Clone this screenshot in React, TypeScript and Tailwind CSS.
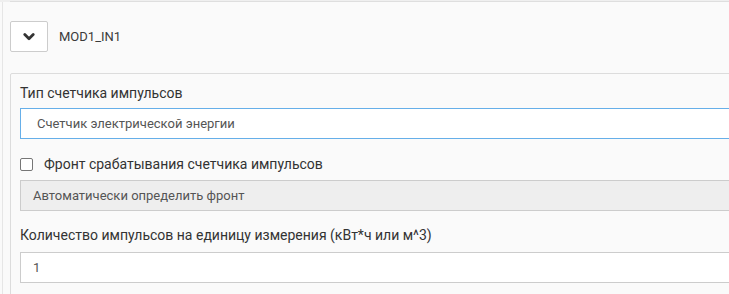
import React from 'react';

const ChevronDown: React.FC = () => (
  <svg width="12" height="8" viewBox="0 0 12 8" fill="none">
    <path d="M1.8 1.6 L6 5.8 L10.2 1.6" stroke="#333" strokeWidth="2.8" strokeLinecap="round" strokeLinejoin="round" />
  </svg>
);

const App: React.FC = () => {
  return (
    <div className="w-[729px] h-[294px] overflow-hidden bg-[#fafafa] font-['Roboto',sans-serif] text-[#333]">
      <div className="w-[800px] h-full ml-[2px] border-l border-[#e6e6e6] pl-[7px]">
        <div className="h-[2px] -ml-[10px] bg-[#efefef] flex">
          <div className="w-[10px]" />
          <div className="flex-1 h-[2px] border-b border-[#dedede] bg-[#efefef]" />
        </div>

        <div className="flex items-center mt-[19px] h-[31px]">
          <div className="w-[38px] h-[31px] flex items-center justify-center bg-white border border-[#ccc] rounded-[2px]">
            <ChevronDown />
          </div>
          <span className="ml-[11px] text-[13px] leading-[20px] text-[#3a3a3a]">MOD1_IN1</span>
        </div>

        <div className="mt-[21px] border border-[#dcdcdc] rounded-[2px] bg-[#fafafa] pl-[9px] pt-[9px] pb-[12px]">
          <div className="text-[14px] leading-[20px]">Тип счетчика импульсов</div>
          <div className="mt-[5px] h-[31px] border border-[#66afe9] bg-white flex items-center pl-[16px] text-[13px] text-[#555]">
            Счетчик электрической энергии
          </div>

          <div className="mt-[15px] h-[20px] flex items-center">
            <div className="w-[13px] h-[13px] border border-[#767676] rounded-[2px] bg-white" />
            <span className="ml-[11px] text-[14px] leading-[20px]">Фронт срабатывания счетчика импульсов</span>
          </div>
          <div className="mt-[6px] h-[31px] border border-[#ccc] bg-[#eee] flex items-center pl-[12px] text-[13px] text-[#555]">
            Автоматически определить фронт
          </div>

          <div className="mt-[14px] text-[14px] leading-[20px]">Количество импульсов на единицу измерения (кВт*ч или м^3)</div>
          <div className="mt-[7px] h-[31px] border border-[#ccc] bg-white flex items-center pl-[12px] text-[13px] text-[#555]">
            1
          </div>
        </div>
      </div>
    </div>
  );
};

export default App;
